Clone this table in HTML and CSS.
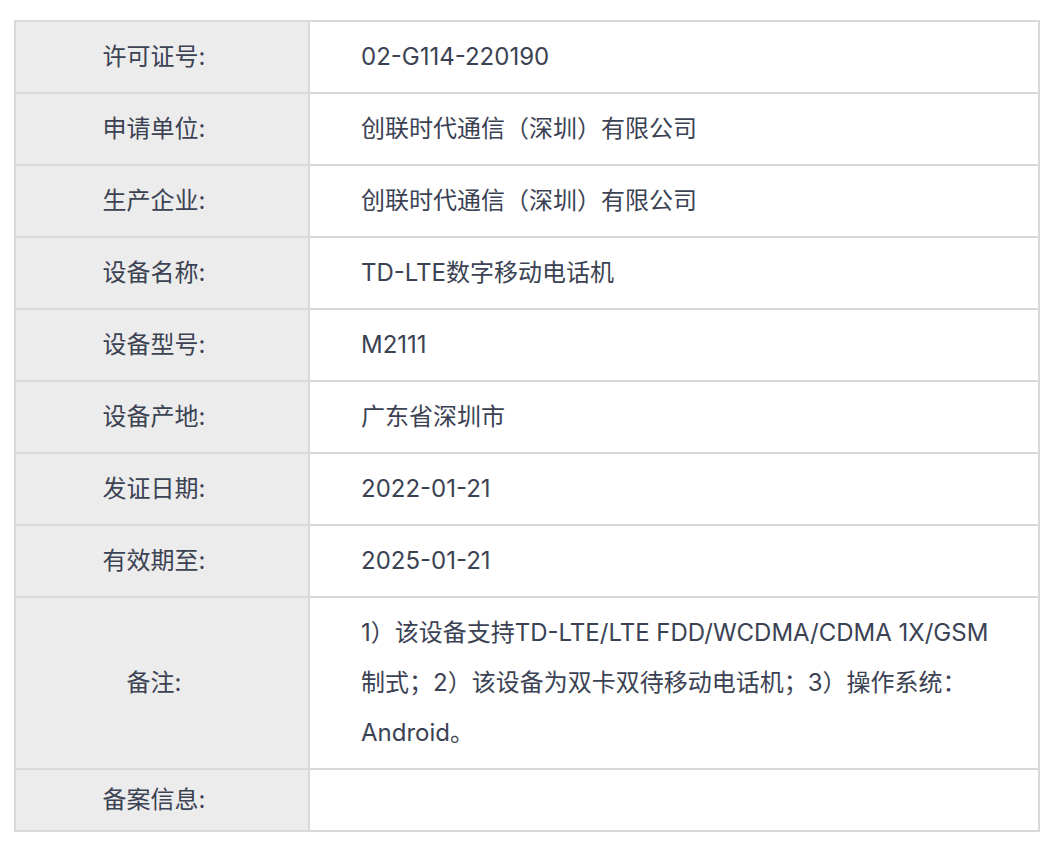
FILE: index.html
```html
<!DOCTYPE html>
<html lang="zh-CN">
<head>
<meta charset="utf-8">
<title>许可证信息</title>
<link rel="stylesheet" href="styles.css">
</head>
<body>
<div class="wrap">
<table class="info">
<tbody>
<tr><th>许可证号:</th><td>02-G114-220190</td></tr>
<tr><th>申请单位:</th><td>创联时代通信（深圳）有限公司</td></tr>
<tr><th>生产企业:</th><td>创联时代通信（深圳）有限公司</td></tr>
<tr><th>设备名称:</th><td>TD-LTE数字移动电话机</td></tr>
<tr><th>设备型号:</th><td>M2111</td></tr>
<tr><th>设备产地:</th><td>广东省深圳市</td></tr>
<tr><th>发证日期:</th><td>2022-01-21</td></tr>
<tr><th>有效期至:</th><td>2025-01-21</td></tr>
<tr class="remark"><th>备注:</th><td>1）该设备支持TD-LTE/LTE FDD/WCDMA/CDMA 1X/GSM制式；2）该设备为双卡双待移动电话机；3）操作系统：Android。</td></tr>
<tr class="last"><th>备案信息:</th><td></td></tr>
</tbody>
</table>
</div>
</body>
</html>
```
FILE: styles.css
```css
html, body {
  margin: 0;
  padding: 0;
  background: #ffffff;
}
.wrap {
  padding: 20px 12px 0 14px;
}
.info {
  width: 1026px;
  border-collapse: separate;
  border-spacing: 0;
  border-top: 2px solid #d9d9d9;
  border-left: 2px solid #d9d9d9;
  table-layout: fixed;
  font-family: Inter, "Noto Sans CJK SC", sans-serif;
  font-size: 24px;
  color: #3b4253;
}
.info th, .info td {
  border-right: 2px solid #d9d9d9;
  border-bottom: 2px solid #d9d9d9;
  height: 72px;
  padding: 0;
  line-height: 32px;
  box-sizing: border-box;
  vertical-align: middle;
}
.info th {
  width: 294px;
  background: #ececec;
  font-weight: normal;
  text-align: center;
  padding-right: 16px;
}
.info td {
  text-align: left;
  padding-left: 51px;
  padding-right: 32px;
  background: #ffffff;
}
.info tr.remark th, .info tr.remark td {
  height: 172px;
}
.info tr.remark td {
  line-height: 50px;
  padding-top: 10px;
  padding-bottom: 10px;
}
.info tr.last th, .info tr.last td {
  height: 62px;
}
```
